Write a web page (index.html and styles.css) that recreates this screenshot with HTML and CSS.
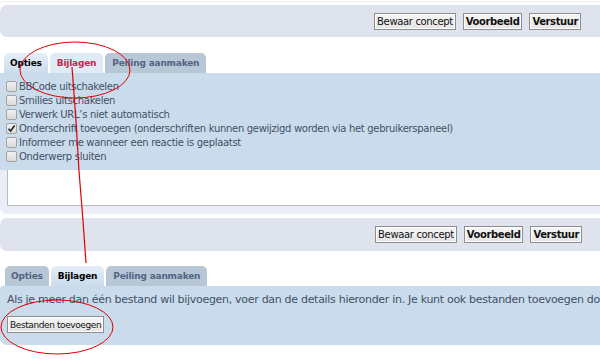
FILE: index.html
```html
<!DOCTYPE html>
<html>
<head>
    <title>Bericht plaatsen</title>
    <link rel="stylesheet" href="styles.css">
</head>
<body>
    <div class="page">
        <div class="rule"></div>

        <!-- Submit bar -->
        <div class="panel submit-bar">
            <button class="btn">Bewaar concept</button>
            <button class="btn btn-bold">Voorbeeld</button>
            <button class="btn btn-bold">Verstuur</button>
        </div>

        <!-- Options tabs -->
        <ul class="tabs first-tabs">
            <li class="tab active">Opties</li>
            <li class="tab hover">Bijlagen</li>
            <li class="tab">Peiling aanmaken</li>
        </ul>
        <div class="panel options">
            <label class="option"><span class="check"></span>BBCode uitschakelen</label>
            <label class="option"><span class="check"></span>Smilies uitschakelen</label>
            <label class="option"><span class="check"></span>Verwerk URL’s niet automatisch</label>
            <label class="option"><span class="check checked"><svg width="9" height="9" viewBox="0 0 9 9"><path d="M1.5 4.8 L3.6 7 L7.6 1.6" fill="none" stroke="#222" stroke-width="1.6"/></svg></span>Onderschrift toevoegen (onderschriften kunnen gewijzigd worden via het gebruikerspaneel)</label>
            <label class="option"><span class="check"></span>Informeer me wanneer een reactie is geplaatst</label>
            <label class="option"><span class="check"></span>Onderwerp sluiten</label>
        </div>
        <div class="panel editor">
            <div class="editor-box"></div>
        </div>

        <!-- Submit bar -->
        <div class="panel submit-bar second-bar">
            <button class="btn">Bewaar concept</button>
            <button class="btn btn-bold">Voorbeeld</button>
            <button class="btn btn-bold">Verstuur</button>
        </div>

        <!-- Attachments tabs -->
        <ul class="tabs second-tabs">
            <li class="tab">Opties</li>
            <li class="tab active">Bijlagen</li>
            <li class="tab">Peiling aanmaken</li>
        </ul>
        <div class="panel attach">
            <p class="attach-text">Als je meer dan één bestand wil bijvoegen, voer dan de details hieronder in. Je kunt ook bestanden toevoegen door ze naar het bericht te slepen.</p>
            <button class="btn btn-add">Bestanden toevoegen</button>
        </div>

        <!-- Red annotation drawn over the screenshot -->
        <svg class="annot" width="600" height="363" viewBox="0 0 600 363">
            <ellipse cx="75" cy="69" rx="55" ry="28" fill="none" stroke="#e00000" stroke-width="1"/>
            <polyline points="72,66 76,120 79,170 83,220 86,262" fill="none" stroke="#e00000" stroke-width="1.2"/>
            <ellipse cx="57" cy="326" rx="56" ry="27" fill="none" stroke="#e00000" stroke-width="1"/>
        </svg>
    </div>
</body>
</html>
```

FILE: styles.css
```css
* {
    margin: 0;
    padding: 0;
    box-sizing: border-box;
}
html, body {
    overflow: hidden;
}
body {
    font-family: 'DejaVu Sans', Verdana, sans-serif;
    font-size: 10px;
    letter-spacing: -0.3px;
    color: #425067;
    background-color: #fff;
}
.page {
    position: relative;
    width: 600px;
    height: 363px;
}
.rule {
    margin-top: 1px;
    height: 1px;
    background-color: #eeeeee;
}
/* Panels */
.panel {
    background-color: #cadceb;
}
.submit-bar {
    margin-top: 3px;
    height: 32px;
    background-color: #dee3ee;
    border-radius: 7px 0 0 7px;
    display: flex;
    justify-content: flex-end;
    align-items: center;
    gap: 7px;
    padding-right: 19px;
}
.second-bar {
    margin-top: 4px;
    height: 33px;
    padding-right: 18px;
}
/* Buttons */
.btn {
    height: 17px;
    padding: 0 2px;
    font-family: 'DejaVu Sans', Verdana, sans-serif;
    font-size: 10px;
    letter-spacing: -0.35px;
    color: #111;
    background: linear-gradient(#f6f6f6, #e4e4e4);
    border: 1px solid #8e8e8e;
    box-shadow: inset 0 0 0 1px #fdfdfd;
}
.btn-bold {
    font-weight: bold;
    letter-spacing: -0.4px;
}
/* Tabs */
.tabs {
    list-style: none;
    display: flex;
    gap: 2px;
    height: 20px;
    padding-left: 4px;
}
.first-tabs {
    margin-top: 16px;
}
.second-tabs {
    margin-top: 15px;
    padding-left: 5px;
}
.tab {
    padding: 0 7px;
    line-height: 20px;
    font-size: 9px;
    letter-spacing: -0.2px;
    font-weight: bold;
    color: #536482;
    background-color: #b8c7d6;
    border-radius: 5px 5px 0 0;
}
.tab:first-child {
    padding: 0 6px;
}
.tab.active {
    color: #000;
    background: linear-gradient(#e4eef8, #cadceb);
}
.tab.hover {
    color: #bc2a4d;
    background-color: #e1ebf6;
}
/* Options list */
.options {
    height: 97px;
    padding: 6px 0 0 6px;
}
.option {
    display: flex;
    align-items: center;
    height: 14px;
    white-space: nowrap;
}
.check {
    width: 11px;
    height: 11px;
    margin-right: 2px;
    border: 1px solid #a3a3a3;
    border-radius: 2px;
    background: linear-gradient(#f2f2f2, #d9d9d9);
    display: flex;
    align-items: center;
    justify-content: center;
}
/* Editor area */
.editor {
    height: 44px;
    padding: 0 0 8px 7px;
    background-color: #eceef7;
    border-radius: 0 0 0 7px;
}
.editor-box {
    height: 36px;
    background-color: #fff;
    border-left: 1px solid #b6bcc2;
    border-bottom: 1px solid #b6bcc2;
}
/* Attachments */
.attach {
    height: 59px;
    padding: 7px 0 0 7px;
    border-radius: 3px 0 0 7px;
}
.attach-text {
    white-space: nowrap;
    line-height: 14px;
    font-size: 11px;
    letter-spacing: -0.3px;
}
.btn-add {
    margin-top: 9px;
    height: 17px;
    padding: 0 2px;
    font-size: 9px;
    letter-spacing: -0.4px;
}
/* Annotation overlay */
.annot {
    position: absolute;
    top: 0;
    left: 0;
    pointer-events: none;
}
```
